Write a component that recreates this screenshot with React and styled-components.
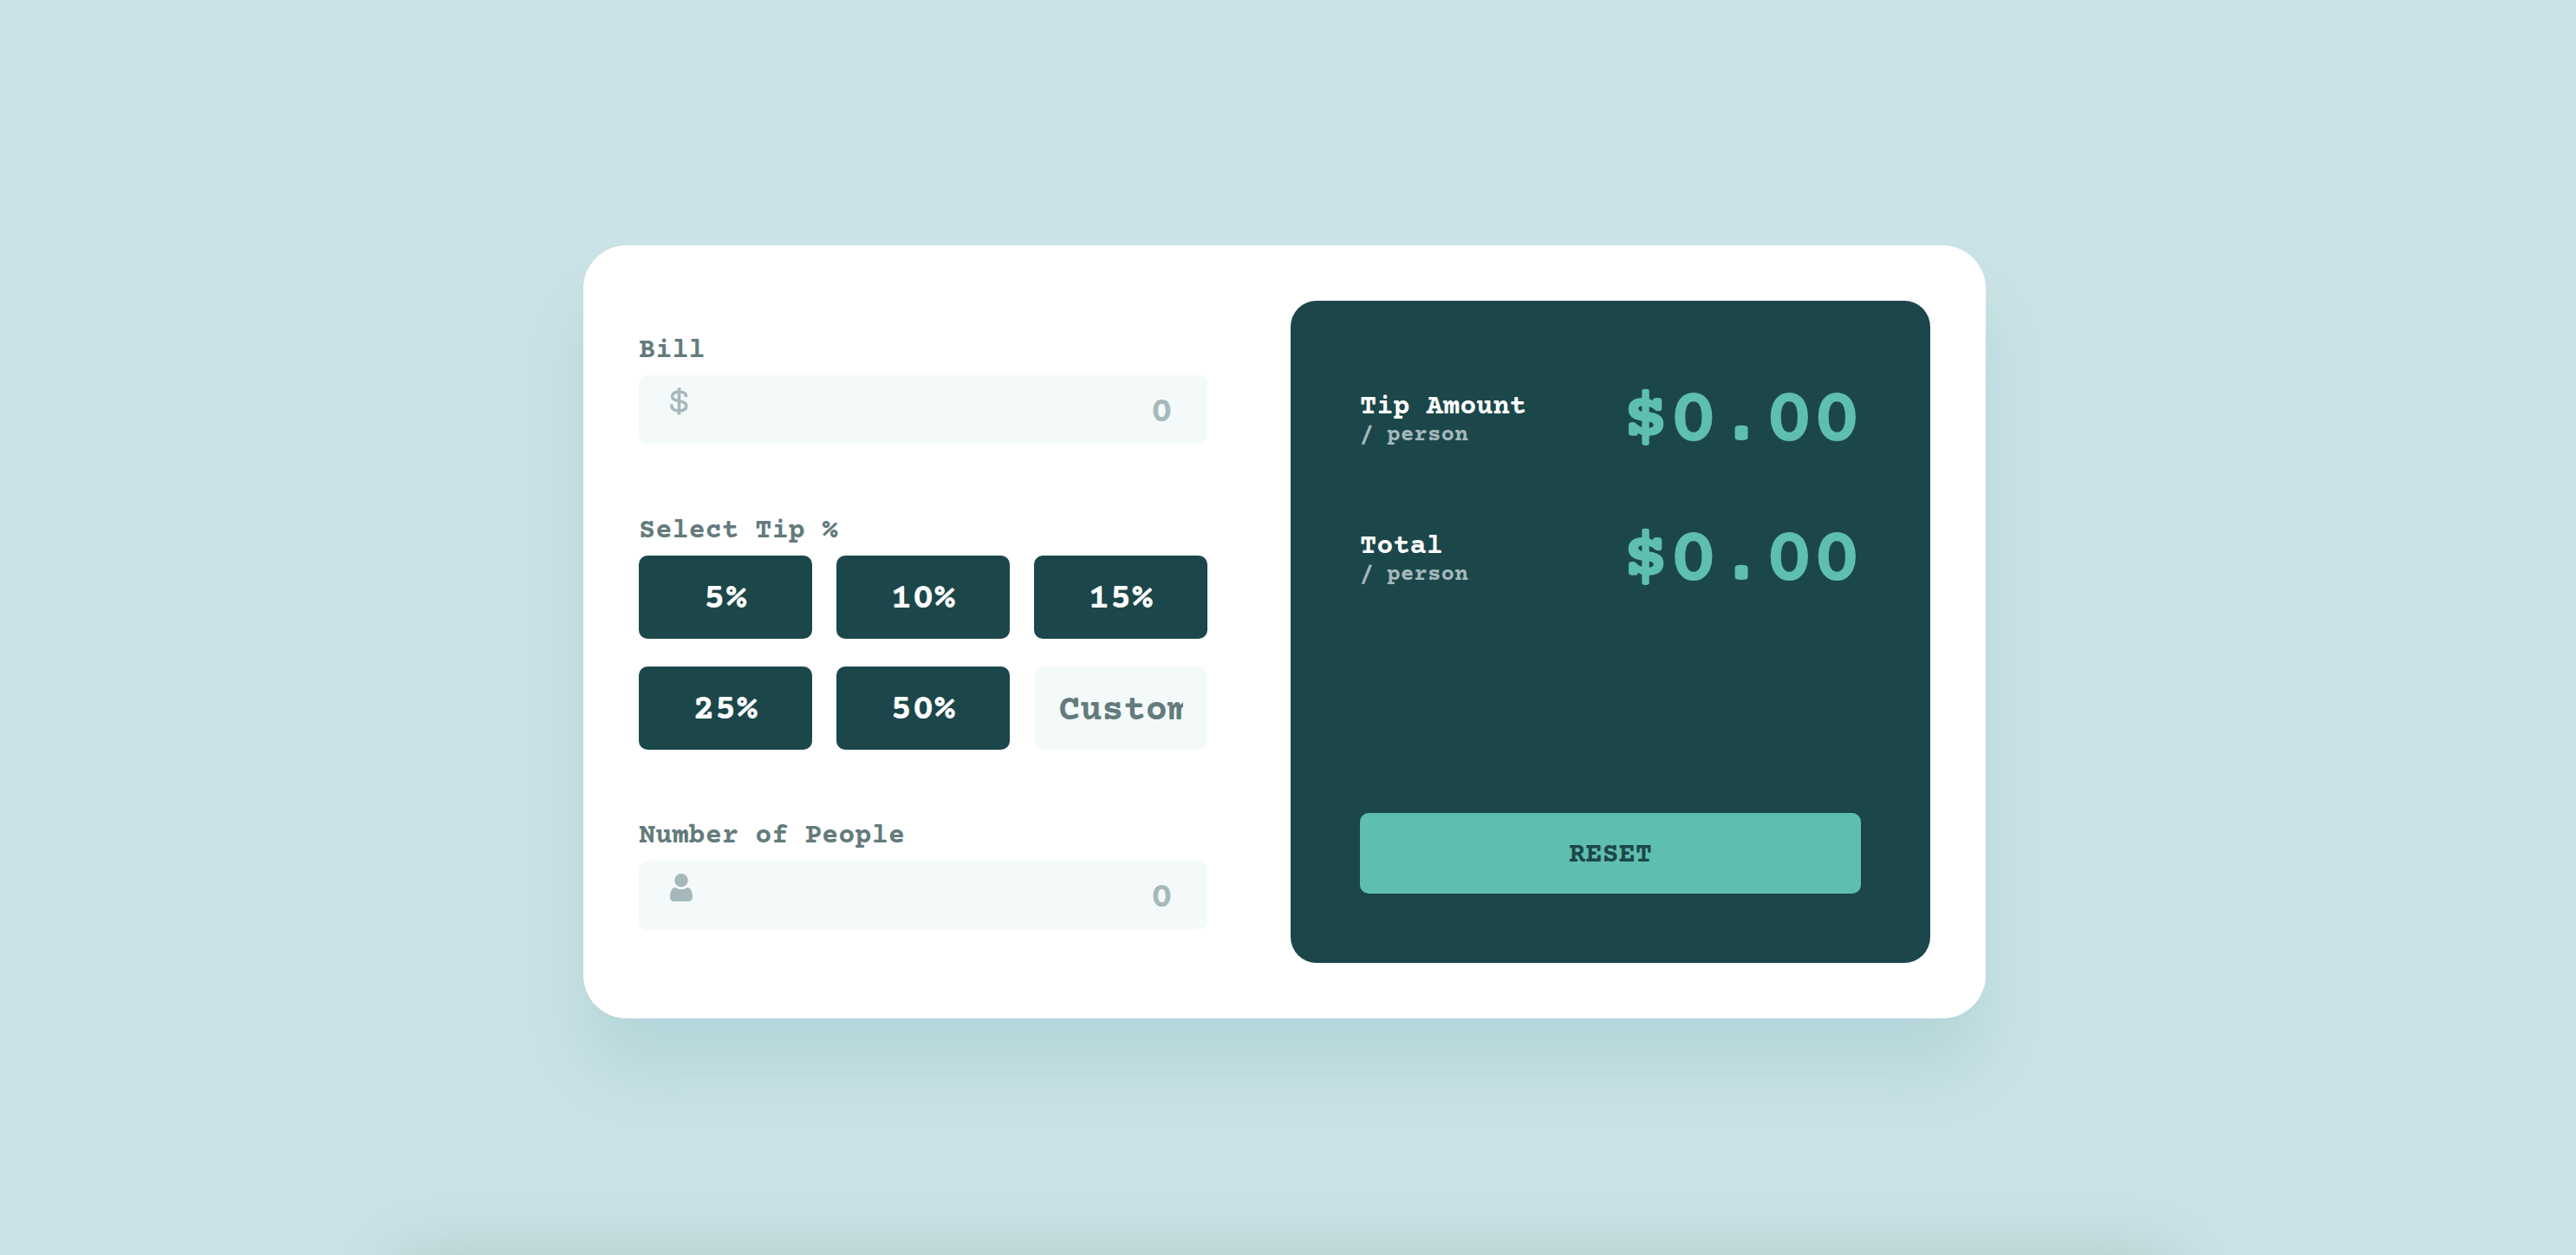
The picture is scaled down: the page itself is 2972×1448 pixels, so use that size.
import React, { useState } from "react";
import styled, { createGlobalStyle, ThemeProvider } from "styled-components";

const theme = {
  page: "#cbe3e6",
  dark: "#1c474a",
  accent: "#5fbfaf",
  label: "#637b7d",
  muted: "#a5b9bc",
  field: "#f4faf9",
  white: "#ffffff",
};

const GlobalStyle = createGlobalStyle`
  *, *::before, *::after { box-sizing: border-box; }
  body {
    margin: 0;
    background: ${theme.page};
    font-family: "Courier Prime", Courier, "Liberation Mono", monospace;
    font-weight: 700;
    font-size: 32px;
    line-height: 36px;
  }
  button, input { font: inherit; border: 0; margin: 0; }
`;

const Page = styled.div`
  display: flex;
  flex-direction: column;
  height: 100vh;
  min-height: 1000px;
  padding-right: 8px;
  overflow: hidden;
`;

const Main = styled.main`
  flex: 1 0 auto;
  display: flex;
  align-items: center;
  justify-content: center;
  padding-top: 10px;
`;

const Shelf = styled.div`
  flex: none;
  align-self: center;
  width: 69%;
  height: 200px;
  margin-bottom: -200px;
  box-shadow: 0 0 72px rgba(150, 180, 175, 0.5);
`;

const Card = styled.form`
  display: grid;
  grid-template-columns: 656fr 738fr;
  gap: 96px;
  width: 100%;
  max-width: 1618px;
  padding: 64px;
  border-radius: 50px;
  background: ${(p) => p.theme.white};
  box-shadow: 0 64px 80px rgba(120, 178, 184, 0.26);
`;

const Inputs = styled.div`
  display: flex;
  flex-direction: column;
  justify-content: center;
  gap: 80px;
  min-width: 0;
`;

const Group = styled.div`
  display: flex;
  flex-direction: column;
  gap: 8px;
`;

const Label = styled.label`
  color: ${(p) => p.theme.label};
  line-height: 40px;
`;

const Field = styled.div`
  display: flex;
  align-items: flex-start;
  padding: 0 40px 0 36px;
  border-radius: 10px;
  background: ${(p) => p.theme.field};
`;

const Icon = styled.svg`
  flex: none;
  margin-top: 14px;
  color: ${(p) => p.theme.muted};
`;

const NumberInput = styled.input`
  flex: 1;
  min-width: 0;
  height: 80px;
  padding: 6px 0 0;
  background: transparent;
  color: ${(p) => p.theme.dark};
  font-size: 42px;
  text-align: right;
  outline: 0;
  &::placeholder { color: ${(p) => p.theme.muted}; opacity: 1; }
`;

const TipGrid = styled.div`
  display: grid;
  grid-template-columns: repeat(3, 1fr);
  gap: 32px 28px;
`;

const TipButton = styled.button`
  height: 96px;
  padding: 6px 0 0;
  border-radius: 10px;
  background: ${(p) => (p.$active ? p.theme.accent : p.theme.dark)};
  color: ${(p) => (p.$active ? p.theme.dark : p.theme.white)};
  font-size: 42px;
  cursor: pointer;
`;

const CustomInput = styled.input`
  min-width: 0;
  width: 100%;
  height: 96px;
  padding: 6px 28px 0;
  border-radius: 10px;
  background: ${(p) => p.theme.field};
  color: ${(p) => p.theme.dark};
  font-size: 42px;
  outline: 0;
  &::placeholder { color: ${(p) => p.theme.label}; opacity: 1; }
`;

const Panel = styled.section`
  display: flex;
  flex-direction: column;
  gap: 56px;
  min-height: 764px;
  padding: 80px;
  border-radius: 30px;
  background: ${(p) => p.theme.dark};
`;

const ResultRow = styled.div`
  display: flex;
  align-items: center;
  justify-content: space-between;
`;

const ResultName = styled.div`
  display: flex;
  flex-direction: column;
  padding-top: 10px;
  color: ${(p) => p.theme.white};
`;

const PerPerson = styled.span`
  color: ${(p) => p.theme.muted};
  font-size: 26px;
  line-height: 30px;
`;

const Amount = styled.output`
  padding-top: 17px;
  color: ${(p) => p.theme.accent};
  font-size: 92px;
  line-height: 88px;
`;

const ResetButton = styled.button`
  height: 93px;
  margin-top: auto;
  padding: 4px 0 0;
  border-radius: 10px;
  background: ${(p) => p.theme.accent};
  color: ${(p) => p.theme.dark};
  cursor: pointer;
`;

const DollarIcon = () => (
  <Icon width="21" height="32" viewBox="0 0 21 32" fill="none" stroke="currentColor" strokeWidth="3.6" aria-hidden="true">
    <path d="M10.5 0.5V31.5" />
    <path d="M18.5 11V10C18.5 7 15.500 5 10.500 5S2.600 7 2.600 10.500C2.600 14 5.500 15 10.500 15.700S18.800 17.500 18.800 21.500S15.500 27 10.500 27S1.900 25 1.900 21V19.500" />
  </Icon>
);

const PersonIcon = () => (
  <Icon width="26" height="33" viewBox="0 0 26 33" fill="currentColor" aria-hidden="true">
    <circle cx="13" cy="8.700" r="7.700" />
    <path d="M6.500 17C8.500 18.600 10.700 19.200 13 19.200S17.500 18.600 19.500 17C21.500 17 23 17.500 24 19.500C25.500 22.500 26 25.500 26 28C26 31 24.500 33 21.500 33H4.500C1.500 33 0 31 0 28C0 25.500 0.500 22.500 2 19.500C3 17.500 4.500 17 6.500 17Z" />
  </Icon>
);

const Result = ({ id, name, value }) => (
  <ResultRow>
    <ResultName>
      <span id={id}>{name}</span>
      <PerPerson>/ person</PerPerson>
    </ResultName>
    <Amount aria-labelledby={id}>${value.toFixed(2)}</Amount>
  </ResultRow>
);

const TIPS = [5, 10, 15, 25, 50];

export default function App() {
  const [bill, setBill] = useState("");
  const [people, setPeople] = useState("");
  const [tip, setTip] = useState(null);
  const [custom, setCustom] = useState("");

  const count = Number(people) || 0;
  const amount = Number(bill) || 0;
  const rate = (custom !== "" ? Number(custom) || 0 : tip || 0) / 100;
  const tipEach = count > 0 ? (amount * rate) / count : 0;
  const totalEach = count > 0 ? amount / count + tipEach : 0;

  const reset = () => {
    setBill("");
    setPeople("");
    setTip(null);
    setCustom("");
  };

  return (
    <ThemeProvider theme={theme}>
      <GlobalStyle />
      <Page>
        <Main>
          <Card onSubmit={(e) => e.preventDefault()}>
            <Inputs>
              <Group>
                <Label htmlFor="bill">Bill</Label>
                <Field>
                  <DollarIcon />
                  <NumberInput id="bill" inputMode="decimal" placeholder="0" value={bill} onChange={(e) => setBill(e.target.value)} />
                </Field>
              </Group>
              <Group>
                <Label htmlFor="custom">Select Tip %</Label>
                <TipGrid>
                  {TIPS.map((t) => (
                    <TipButton
                      key={t}
                      type="button"
                      $active={custom === "" && tip === t}
                      onClick={() => {
                        setTip(t);
                        setCustom("");
                      }}
                    >
                      {t}%
                    </TipButton>
                  ))}
                  <CustomInput id="custom" inputMode="decimal" placeholder="Custom" value={custom} onChange={(e) => setCustom(e.target.value)} />
                </TipGrid>
              </Group>
              <Group>
                <Label htmlFor="people">Number of People</Label>
                <Field>
                  <PersonIcon />
                  <NumberInput id="people" inputMode="numeric" placeholder="0" value={people} onChange={(e) => setPeople(e.target.value)} />
                </Field>
              </Group>
            </Inputs>
            <Panel>
              <Result id="tip-amount" name="Tip Amount" value={tipEach} />
              <Result id="total" name="Total" value={totalEach} />
              <ResetButton type="button" onClick={reset}>RESET</ResetButton>
            </Panel>
          </Card>
        </Main>
        <Shelf />
      </Page>
    </ThemeProvider>
  );
}
